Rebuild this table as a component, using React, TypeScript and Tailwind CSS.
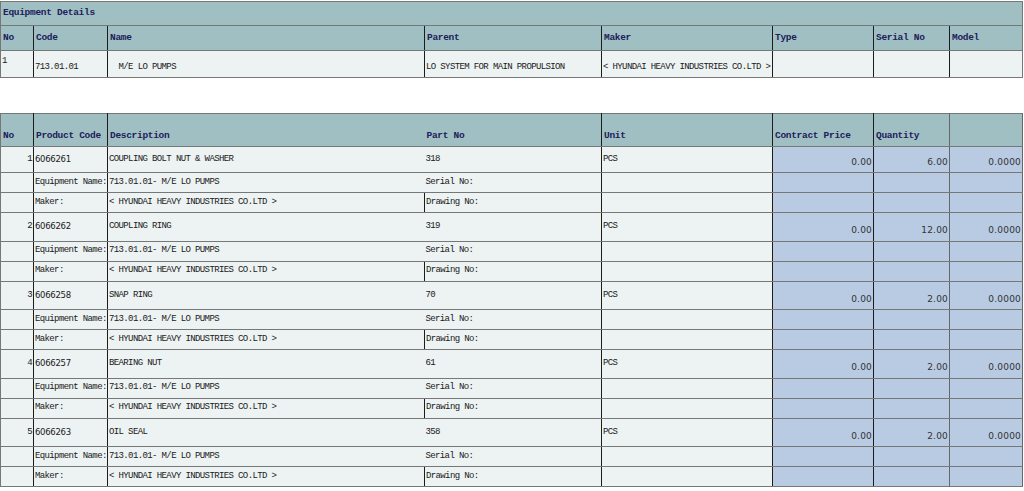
import React from "react"

const items = [
  { no: 1, code: "6066261", desc: "COUPLING BOLT NUT & WASHER", part: "318", qty: "6.00", first: true },
  { no: 2, code: "6066262", desc: "COUPLING RING", part: "319", qty: "12.00" },
  { no: 3, code: "6066258", desc: "SNAP RING", part: "70", qty: "2.00" },
  { no: 4, code: "6066257", desc: "BEARING NUT", part: "61", qty: "2.00" },
  { no: 5, code: "6066263", desc: "OIL SEAL", part: "358", qty: "2.00" },
]

const widths = [33, 74, 317, 177, 171, 101, 76, 73]

function Cols() {
  return (
    <colgroup>
      {widths.map((w, i) => (
        <col key={i} style={{ width: w }} />
      ))}
    </colgroup>
  )
}

// base cell: gray horizontal rules, near-black vertical rules
const td = "border border-y-[#777] border-x-[#1c1c1c] px-px whitespace-nowrap overflow-hidden"
const th = "border border-y-[#777] border-x-[#1c1c1c] px-[2px] text-left font-bold text-[9.5px] tracking-[-0.3px] text-[#20205a] whitespace-nowrap"
const blue = "bg-[#b8cbe3]"
const num = "text-right align-bottom pb-[3px] text-[#333] font-['DejaVu_Sans',sans-serif] text-[9px] tracking-[0.2px]"

export default function App() {
  return (
    <div className="w-[1024px] h-[491px] bg-white pt-px font-['Liberation_Mono',monospace] text-[9px] tracking-[-0.62px] text-[#1a1a1a]">
      {/* equipment details */}
      <table className="w-[1023px] table-fixed border-collapse">
        <Cols />
        <tbody>
          <tr className="h-[24px] bg-[#a0bfc3]">
            <td colSpan={8} className={`${th} border-x-[#777]`}>Equipment Details</td>
          </tr>
          <tr className="h-[25px] bg-[#a0bfc3]">
            <th className={`${th} border-l-[#777]`}>No</th>
            <th className={th}>Code</th>
            <th className={th}>Name</th>
            <th className={`${th} border-l-[#555]`}>Parent</th>
            <th className={th}>Maker</th>
            <th className={th}>Type</th>
            <th className={th}>Serial No</th>
            <th className={`${th} border-x-[#777]`}>Model</th>
          </tr>
          <tr className="h-[27px] bg-[#edf2f2]">
            <td className={`${td} border-l-[#777] align-top pt-[4px]`}>1</td>
            <td className={`${td} align-bottom pb-[3px]`}>713.01.01</td>
            <td className={`${td} align-bottom pb-[3px] whitespace-pre`}>{"  M/E LO PUMPS"}</td>
            <td className={`${td} border-l-[#555] align-bottom pb-[3px]`}>LO SYSTEM FOR MAIN PROPULSION</td>
            <td className={`${td} align-bottom pb-[3px]`}>{"< HYUNDAI HEAVY INDUSTRIES CO.LTD >"}</td>
            <td className={td}></td>
            <td className={td}></td>
            <td className={`${td} border-x-[#777]`}></td>
          </tr>
        </tbody>
      </table>

      <div className="h-[35px]" />

      {/* product lines */}
      <table className="w-[1023px] table-fixed border-collapse">
        <Cols />
        <tbody>
          <tr className="h-[33px] bg-[#a0bfc3]">
            <th className={`${th} border-l-[#777] align-bottom pb-[3px]`}>No</th>
            <th className={`${th} align-bottom pb-[3px]`}>Product Code</th>
            <th className={`${th} align-bottom pb-[3px] border-r-0`}>Description</th>
            <th className={`${th} align-bottom pb-[3px] border-l-0`}>Part No</th>
            <th className={`${th} align-bottom pb-[3px]`}>Unit</th>
            <th className={`${th} align-bottom pb-[3px]`}>Contract Price</th>
            <th className={`${th} align-bottom pb-[3px] border-r-[#666]`}>Quantity</th>
            <th className={`${th} align-bottom pb-[3px] border-x-[#666]`}></th>
          </tr>
          {items.map((it) => (
            <React.Fragment key={it.no}>
              <tr className={`${it.first ? "h-[26px]" : "h-[28.5px]"} bg-[#edf2f2]`}>
                <td className={`${td} border-l-[#777] text-right`}>{it.no}</td>
                <td className={`${td} font-['DejaVu_Sans',sans-serif] text-[8.5px] tracking-[-0.3px]`}>{it.code}</td>
                <td className={`${td} border-r-0`}>{it.desc}</td>
                <td className={`${td} border-l-0`}>{it.part}</td>
                <td className={td}>PCS</td>
                <td className={`${td} ${blue} ${num}`}>0.00</td>
                <td className={`${td} ${blue} ${num} border-r-[#666]`}>{it.qty}</td>
                <td className={`${td} ${blue} ${num} border-x-[#666]`}>0.0000</td>
              </tr>
              <tr className="h-[20px] bg-[#edf2f2]">
                <td className={`${td} border-l-[#777]`}></td>
                <td className={td}>Equipment Name:</td>
                <td className={`${td} border-r-0`}>713.01.01- M/E LO PUMPS</td>
                <td className={`${td} border-l-0`}>Serial No:</td>
                <td className={td}></td>
                <td className={`${td} ${blue}`}></td>
                <td className={`${td} ${blue} border-r-[#666]`}></td>
                <td className={`${td} ${blue} border-x-[#666]`}></td>
              </tr>
              <tr className="h-[20px] bg-[#edf2f2]">
                <td className={`${td} border-l-[#777]`}></td>
                <td className={td}>Maker:</td>
                <td className={td}>{"< HYUNDAI HEAVY INDUSTRIES CO.LTD >"}</td>
                <td className={`${td} border-l-[#555]`}>Drawing No:</td>
                <td className={td}></td>
                <td className={`${td} ${blue}`}></td>
                <td className={`${td} ${blue} border-r-[#666]`}></td>
                <td className={`${td} ${blue} border-x-[#666]`}></td>
              </tr>
            </React.Fragment>
          ))}
        </tbody>
      </table>
    </div>
  )
}
